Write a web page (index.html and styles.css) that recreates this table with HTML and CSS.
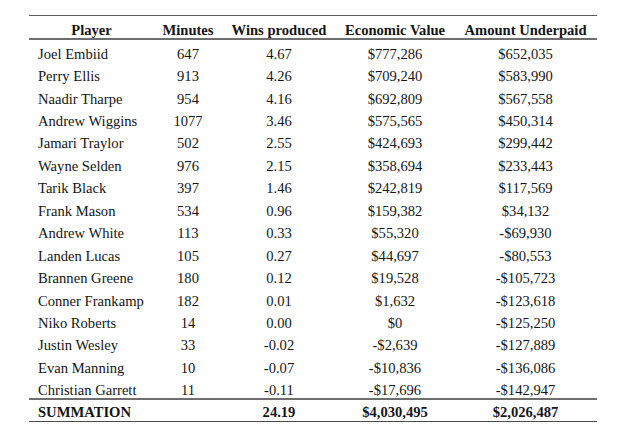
FILE: index.html
```html
<!DOCTYPE html>
<html>
<head>
<meta charset="utf-8">
<link rel="stylesheet" href="styles.css">
</head>
<body>
<table class="stats">
  <colgroup>
    <col class="c-player"><col class="c-min"><col class="c-wins"><col class="c-econ"><col class="c-under">
  </colgroup>
  <thead>
    <tr class="head">
      <th>Player</th><th>Minutes</th><th>Wins produced</th><th>Economic Value</th><th>Amount Underpaid</th>
    </tr>
  </thead>
  <tbody>
    <tr class="first"><td class="name">Joel Embiid</td><td>647</td><td>4.67</td><td>$777,286</td><td>$652,035</td></tr>
    <tr><td class="name">Perry Ellis</td><td>913</td><td>4.26</td><td>$709,240</td><td>$583,990</td></tr>
    <tr><td class="name">Naadir Tharpe</td><td>954</td><td>4.16</td><td>$692,809</td><td>$567,558</td></tr>
    <tr><td class="name">Andrew Wiggins</td><td>1077</td><td>3.46</td><td>$575,565</td><td>$450,314</td></tr>
    <tr><td class="name">Jamari Traylor</td><td>502</td><td>2.55</td><td>$424,693</td><td>$299,442</td></tr>
    <tr><td class="name">Wayne Selden</td><td>976</td><td>2.15</td><td>$358,694</td><td>$233,443</td></tr>
    <tr><td class="name">Tarik Black</td><td>397</td><td>1.46</td><td>$242,819</td><td>$117,569</td></tr>
    <tr><td class="name">Frank Mason</td><td>534</td><td>0.96</td><td>$159,382</td><td>$34,132</td></tr>
    <tr><td class="name">Andrew White</td><td>113</td><td>0.33</td><td>$55,320</td><td>-$69,930</td></tr>
    <tr><td class="name">Landen Lucas</td><td>105</td><td>0.27</td><td>$44,697</td><td>-$80,553</td></tr>
    <tr><td class="name">Brannen Greene</td><td>180</td><td>0.12</td><td>$19,528</td><td>-$105,723</td></tr>
    <tr><td class="name">Conner Frankamp</td><td>182</td><td>0.01</td><td>$1,632</td><td>-$123,618</td></tr>
    <tr><td class="name">Niko Roberts</td><td>14</td><td>0.00</td><td>$0</td><td>-$125,250</td></tr>
    <tr><td class="name">Justin Wesley</td><td>33</td><td>-0.02</td><td>-$2,639</td><td>-$127,889</td></tr>
    <tr><td class="name">Evan Manning</td><td>10</td><td>-0.07</td><td>-$10,836</td><td>-$136,086</td></tr>
    <tr class="last"><td class="name">Christian Garrett</td><td>11</td><td>-0.11</td><td>-$17,696</td><td>-$142,947</td></tr>
  </tbody>
  <tfoot>
    <tr class="total"><td class="name">SUMMATION</td><td></td><td>24.19</td><td>$4,030,495</td><td>$2,026,487</td></tr>
  </tfoot>
</table>
</body>
</html>
```

FILE: styles.css
```css
html, body {
  margin: 0;
  padding: 0;
  background: #ffffff;
}

body {
  padding: 15px 0 0 29px;
  font-family: "Liberation Serif", "Times New Roman", serif;
  font-size: 14.6px;
  color: #151515;
}

.stats {
  border-collapse: collapse;
  table-layout: fixed;
  width: 568px;
}

.c-player { width: 125px; }
.c-min { width: 68px; }
.c-wins { width: 114px; }
.c-econ { width: 118px; }
.c-under { width: 143px; }

.stats th,
.stats td {
  padding: 0;
  text-align: center;
  white-space: nowrap;
}

.stats td {
  height: 22.45px;
  line-height: 22.45px;
}

.stats td.name {
  text-align: left;
  padding-left: 9px;
}

.head th {
  font-weight: bold;
  border-top: 1.5px solid #5c5c5c;
  border-bottom: 2px solid #6e6e6e;
  padding-top: 6px;
  line-height: 16px;
  height: 16px;
}

.first td {
  padding-top: 2.6px;
}

.last td {
  height: 15px;
  line-height: 15px;
  padding-top: 3.6px;
}

.total td {
  font-weight: bold;
  border-top: 2px solid #6e6e6e;
  border-bottom: 1.5px solid #4a4a4a;
  height: 17px;
  line-height: 17px;
  padding-top: 4px;
}

.total td.name {
  padding-left: 9px;
}
```
